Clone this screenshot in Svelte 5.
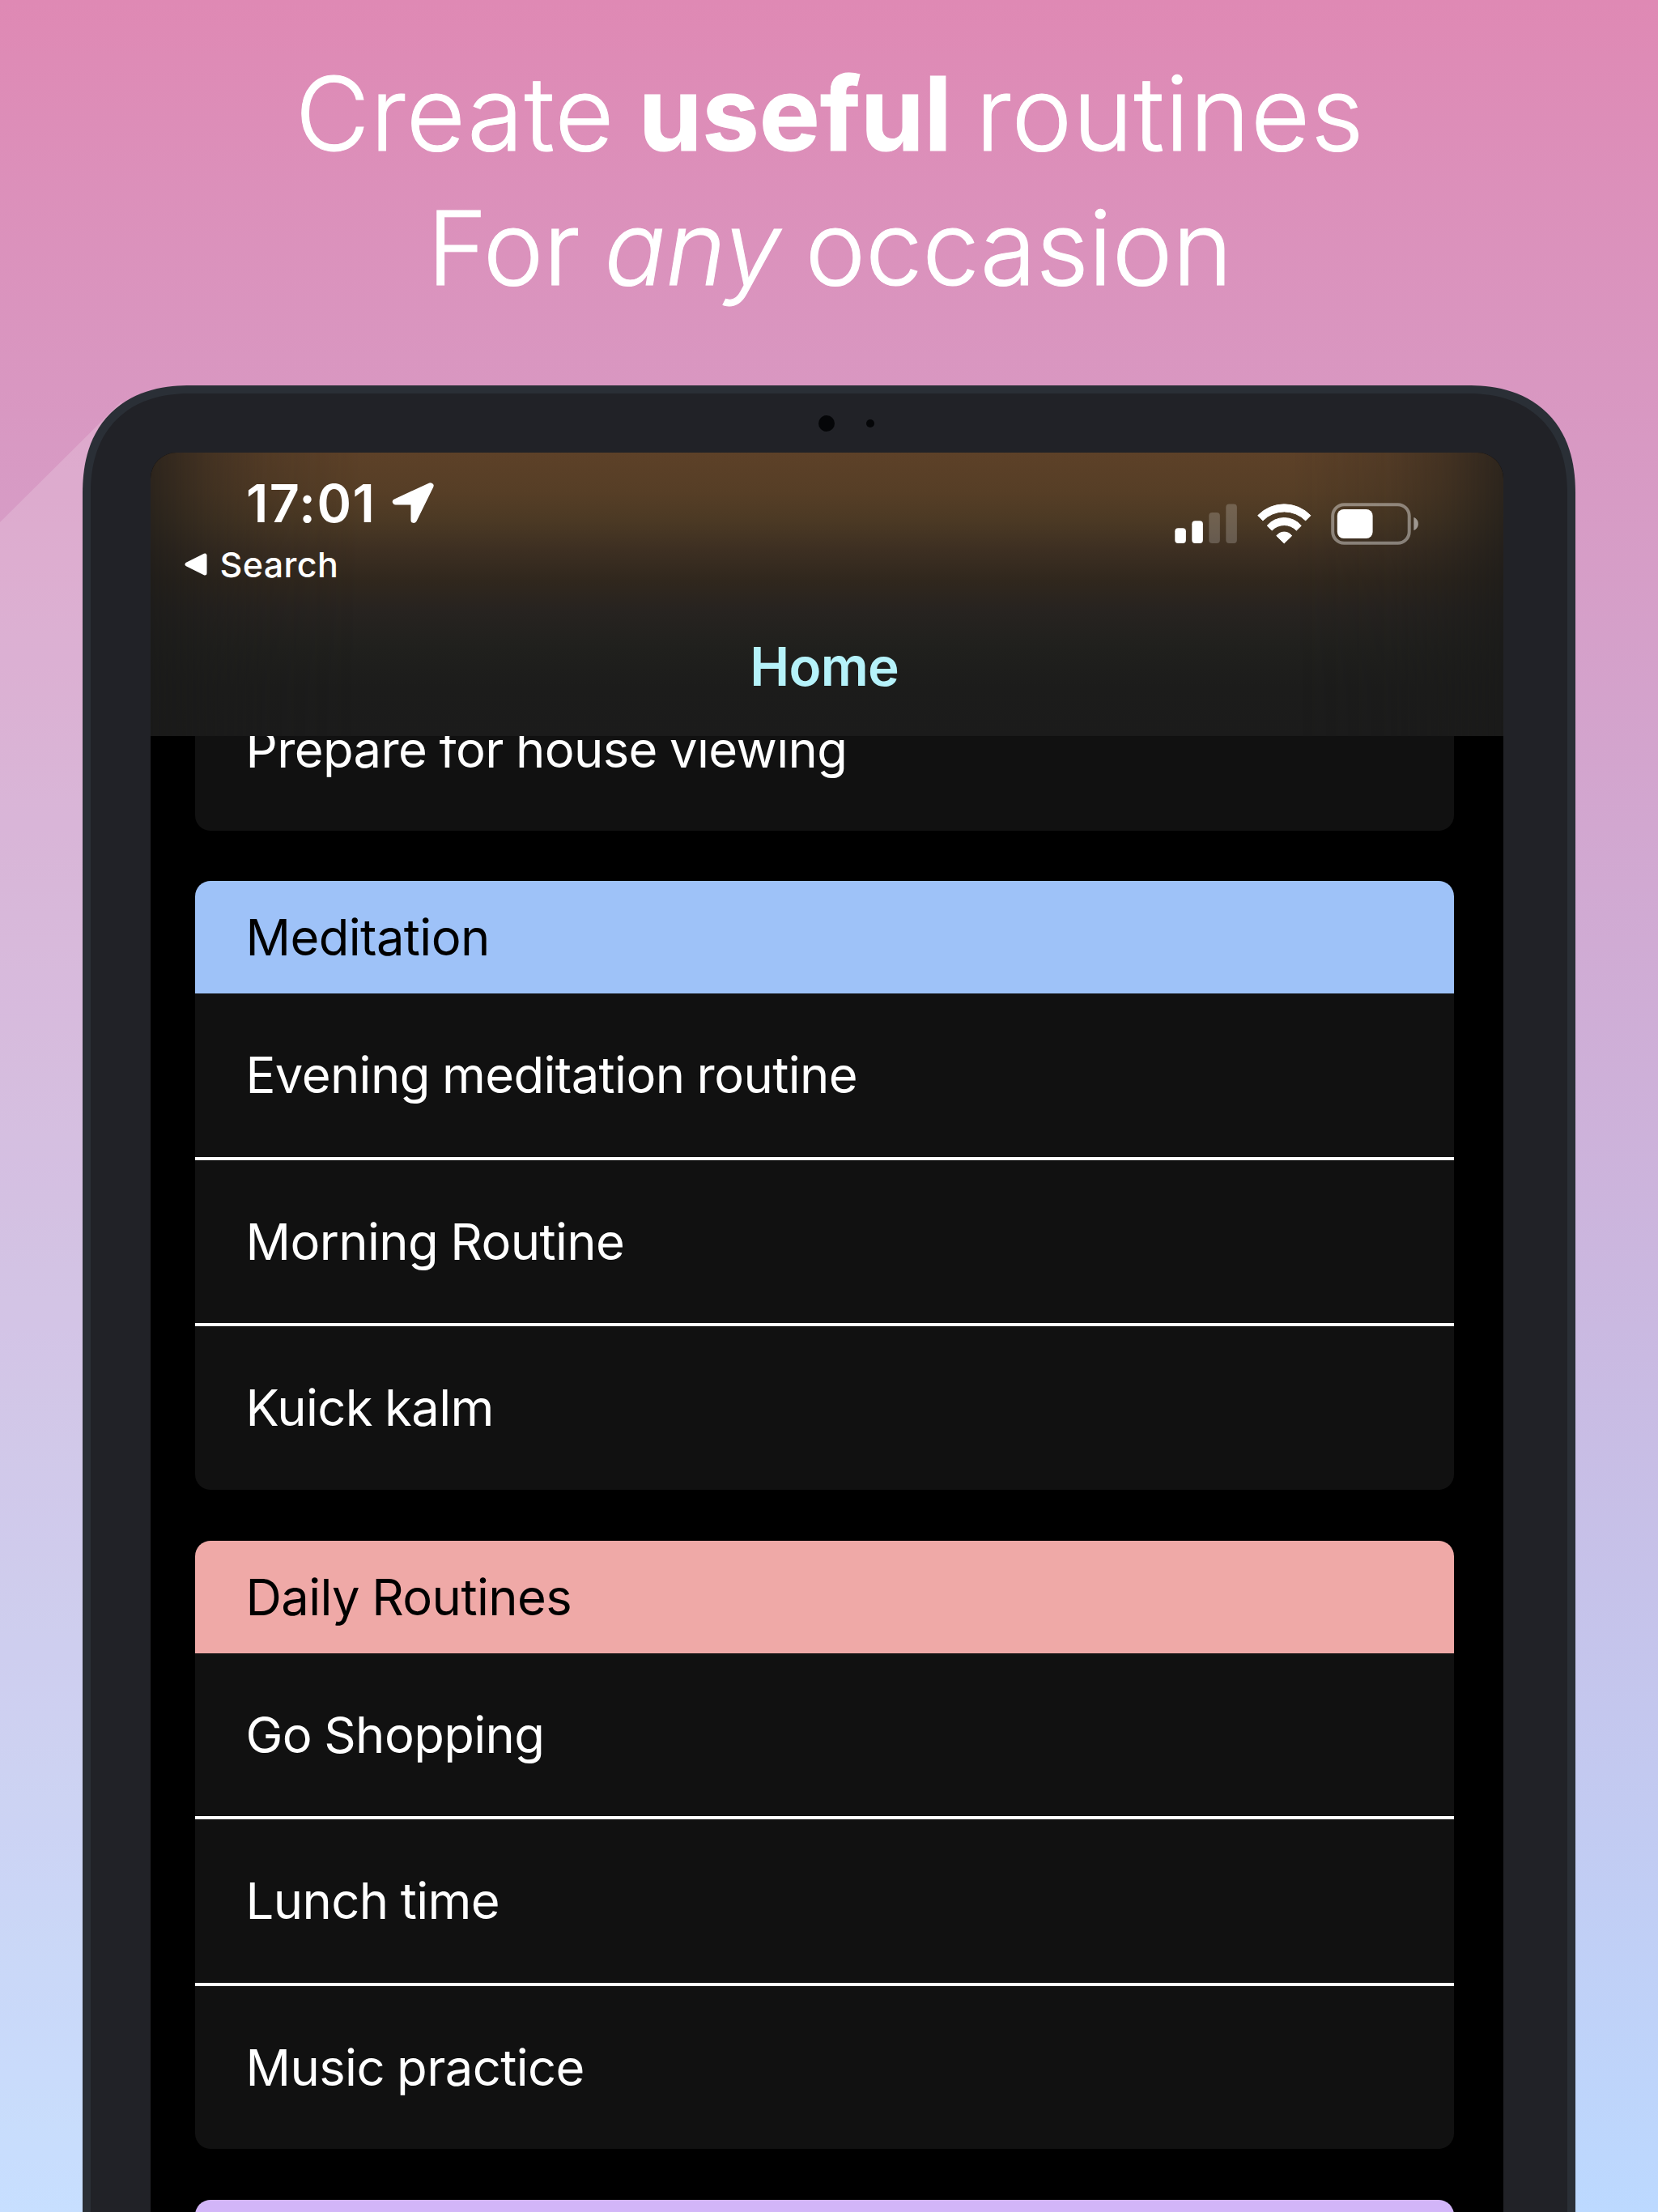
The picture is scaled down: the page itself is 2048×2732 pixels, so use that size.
<script>
  const groups = [
    { title: null, tone: 'none', items: ['Prepare for house viewing'] },
    { title: 'Meditation', tone: 'blue', items: ['Evening meditation routine', 'Morning Routine', 'Kuick kalm'] },
    { title: 'Daily Routines', tone: 'coral', items: ['Go Shopping', 'Lunch time', 'Music practice'] },
    { title: '', tone: 'violet', items: [] }
  ];
</script>

<main class="poster">
  <h1 class="headline">
    <span class="line">Create <strong>useful</strong> routines</span>
    <span class="line second">For <em>any</em> occasion</span>
  </h1>

  <div class="device">
    <div class="bezel">
      <span class="camera"></span>
      <span class="sensor"></span>
    </div>

    <div class="screen">
      <header class="navbar">
        <div class="glow"></div>
        <div class="status">
          <div class="status-left">
            <div class="time">
              <span>17:01</span>
              <svg class="location" viewBox="0 0 60 60" width="60" height="60">
                <path d="M51.8 9 8.6 28.8H31.2V51.2Z" fill="#fff" stroke="#fff" stroke-width="7.5" stroke-linejoin="round" />
              </svg>
            </div>
            <div class="back">
              <svg viewBox="0 0 28 28" width="28" height="28">
                <path d="M25 3v22L3 14Z" fill="#fff" stroke="#fff" stroke-width="5" stroke-linejoin="round" />
              </svg>
              <span>Search</span>
            </div>
          </div>
          <div class="status-right">
            <svg viewBox="0 0 77 52" width="77" height="52">
              <g fill="#fff">
                <rect x="0.3" y="31.3" width="13.6" height="18.8" rx="4" />
                <rect x="21.3" y="22.3" width="13.6" height="27.8" rx="4" />
                <rect x="42.3" y="12" width="13.6" height="38.1" rx="4" opacity="0.2" />
                <rect x="63.3" y="1.6" width="13.6" height="48.5" rx="4" opacity="0.2" />
              </g>
            </svg>
            <svg class="wifi" viewBox="0 -1.3 67 52" width="67" height="52">
              <g fill="#fff" stroke="#fff" stroke-width="1" stroke-linejoin="round">
                <path d="M.7 14.4A45.3 45.3 0 0 1 65.9 14.4L59.7 20.6A37.2 37.2 0 0 0 6.9 20.6Z" />
                <path d="M12.2 27A27.6 27.6 0 0 1 54.3 27L48.4 32.8A20.8 20.8 0 0 0 18.1 32.8Z" />
                <path d="M23.8 39.4A12 12 0 0 1 42.7 39.4L33.2 48.6Z" />
              </g>
            </svg>
            <svg class="battery" viewBox="0 0 109 52" width="109" height="52">
              <rect x="2.2" y="2.2" width="94.5" height="47.6" rx="14" fill="none" stroke="#fff" stroke-opacity="0.4" stroke-width="4" />
              <rect x="7.8" y="8" width="43.8" height="36" rx="8" fill="#fff" />
              <path d="M102.3 18c7.4 2.4 7.4 13.6 0 16Z" fill="#fff" fill-opacity="0.5" />
            </svg>
          </div>
        </div>
        <div class="title">Home</div>
      </header>

      <div class="list">
        {#each groups as group}
          <section class="card {group.tone}">
            {#if group.title !== null}
              <h2>{group.title}</h2>
            {/if}
            {#each group.items as item}
              <div class="row">{item}</div>
            {/each}
          </section>
        {/each}
      </div>
    </div>
  </div>
</main>

<style>
  :global(body) {
    margin: 0;
  }

  .poster {
    position: relative;
    box-sizing: border-box;
    width: 2048px;
    height: 2732px;
    padding-top: 57px;
    overflow: hidden;
    background: linear-gradient(#df89b4, #bcd9ff);
    font-family: Inter, 'Liberation Sans', sans-serif;
    color: #fff;
  }

  /* pale diagonal panel that runs behind the device */
  .poster::before {
    content: '';
    position: absolute;
    inset: 0;
    background: rgba(255, 255, 255, 0.17);
    clip-path: polygon(0 645px, 150px 496px, 150px 100%, 0 100%);
  }

  .headline {
    margin: 0;
    height: 419px;
    font-size: 126px;
    font-weight: 300;
    line-height: 166.3px;
    letter-spacing: 1.1px;
    word-spacing: -7px;
    text-align: center;
    white-space: nowrap;
    -webkit-text-stroke: 1px #fff;
  }

  .line {
    display: block;
    padding-left: 2px;
  }

  .second {
    letter-spacing: -0.2px;
    word-spacing: -5px;
  }

  strong {
    font-weight: 700;
    letter-spacing: 0;
  }

  .device {
    position: relative;
    box-sizing: border-box;
    width: 1844px;
    height: 2400px;
    margin: 0 auto;
    padding: 0 79px 0 73.5px;
    border: 10px solid #2a2f36;
    border-radius: 118px;
    background: #212227;
  }

  @supports (corner-shape: superellipse(1.2)) {
    .device {
      border-radius: 134px;
      corner-shape: superellipse(1.22);
    }
  }

  .bezel {
    display: flex;
    align-items: center;
    gap: 39px;
    height: 72.7px;
    padding: 1px 0 0 825.8px;
    box-sizing: border-box;
  }

  .camera,
  .sensor {
    border-radius: 50%;
    background: #050608;
  }

  .camera {
    width: 20px;
    height: 20px;
  }

  .sensor {
    width: 10px;
    height: 10px;
  }

  .screen {
    height: 2300px;
    overflow: hidden;
    border-radius: 32px 32px 0 0;
    background: #000;
  }

  .navbar {
    position: relative;
    height: 350.3px;
    background: #1a1a19;
  }

  .glow {
    position: absolute;
    inset: 0;
    background: linear-gradient(
      #5d4128 0,
      #563e26 50px,
      #4b3924 85px,
      #3d2f22 120px,
      #30271d 158px,
      #272320 195px,
      #20201d 240px,
      #1c1c1b 290px,
      #1b1b1b 100%
    );
    mask-image: linear-gradient(
      90deg,
      rgba(0, 0, 0, 0.3) 0,
      rgba(0, 0, 0, 0.62) 70px,
      rgba(0, 0, 0, 0.84) 140px,
      #000 260px,
      #000 1410px,
      rgba(0, 0, 0, 0.84) 1530px,
      rgba(0, 0, 0, 0.62) 1602px,
      rgba(0, 0, 0, 0.3) 100%
    );
  }

  .status {
    position: relative;
    display: flex;
    justify-content: space-between;
    height: 152px;
  }

  .time {
    display: flex;
    align-items: center;
    height: 125.6px;
    padding-left: 118.5px;
    font-size: 64.6px;
    font-weight: 600;
    letter-spacing: 1.5px;
  }

  .location {
    margin-left: 15.5px;
  }

  .back {
    display: flex;
    align-items: center;
    gap: 15.5px;
    height: 26.4px;
    padding-left: 42.5px;
    font-size: 43px;
    font-weight: 500;
    line-height: 26.4px;
    letter-spacing: 0.4px;
  }

  .status-right {
    display: flex;
    padding: 62px 104.5px 0 0;
  }

  .wifi {
    margin-left: 24.7px;
  }

  .battery {
    margin-left: 24px;
  }

  .title {
    position: relative;
    margin-top: 72.3px;
    padding-right: 6px;
    font-size: 65.6px;
    font-weight: 600;
    line-height: 80px;
    letter-spacing: -0.7px;
    text-align: center;
    color: #b5f2fa;
  }

  .list {
    display: flex;
    flex-direction: column;
    gap: 62.8px;
    padding: 0 61px 0 55.5px;
  }

  .card {
    overflow: hidden;
    border-radius: 19px;
    background: #111;
    font-size: 61.5px;
    letter-spacing: -0.6px;
    word-spacing: -1.5px;
  }

  /* first card is scrolled part-way under the navigation bar */
  .card.none {
    height: 116.7px;
    border-radius: 0 0 19px 19px;
  }

  .card.none .row {
    margin-top: -84.3px;
  }

  h2 {
    height: 139px;
    margin: 0;
    padding-left: 62.5px;
    font-size: inherit;
    font-weight: 400;
    line-height: 140px;
    color: #000;
  }

  .blue h2 {
    background: #9ec2f8;
  }

  .coral h2 {
    background: #efa9a7;
  }

  .violet h2 {
    background: #d2b5f8;
  }

  .row {
    height: 201.5px;
    padding-left: 62.5px;
    line-height: 202px;
  }

  .row + .row {
    border-top: 4px solid #fff;
  }
</style>
